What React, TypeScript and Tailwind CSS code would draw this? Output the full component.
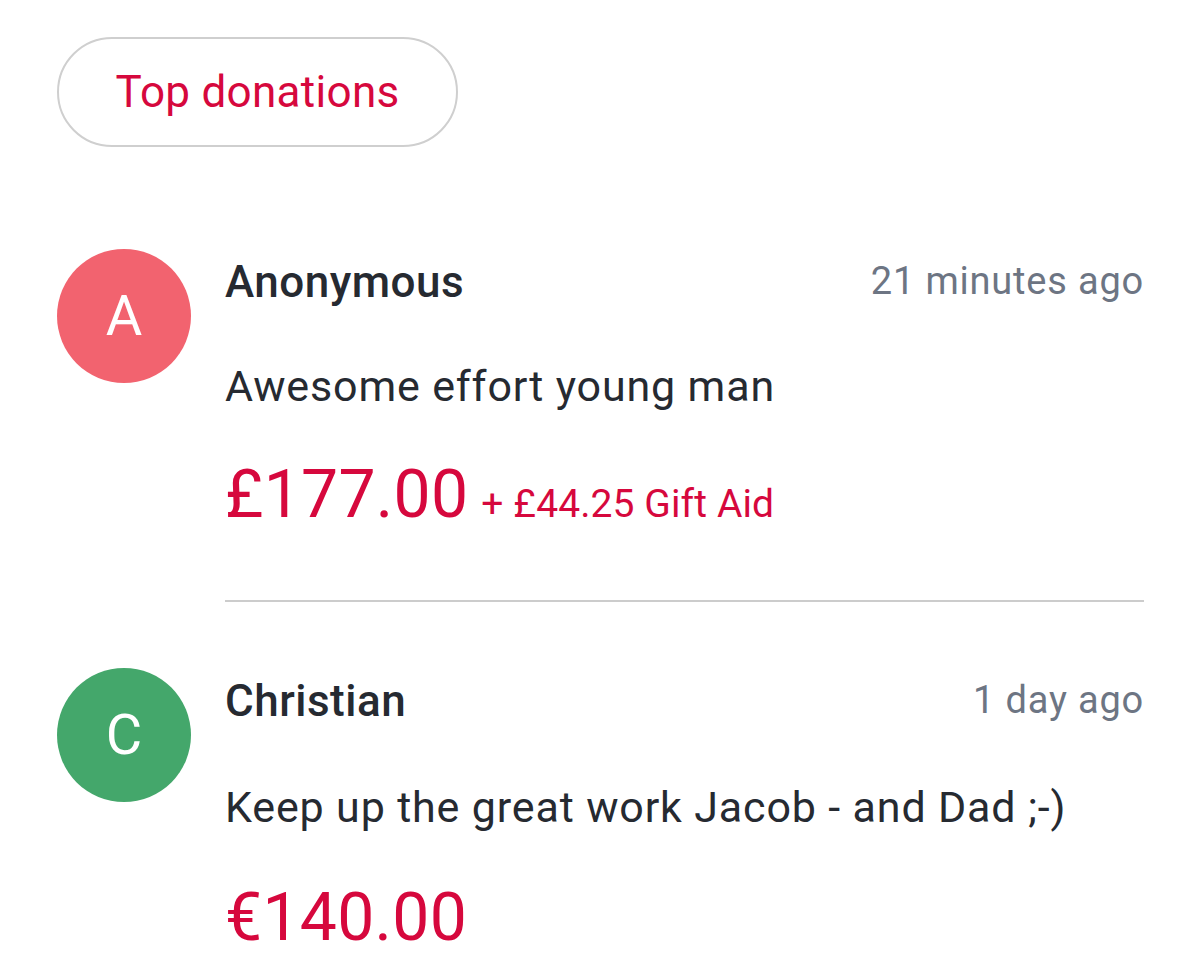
import React from "react";

type Item = {
  initial: string;
  color: string;
  name: string;
  time: string;
  message: string;
  amount: string;
  giftAid?: string;
};

const items: Item[] = [
  {
    initial: "A",
    color: "bg-[#f2636f]",
    name: "Anonymous",
    time: "21 minutes ago",
    message: "Awesome effort young man",
    amount: "£177.00",
    giftAid: "+ £44.25 Gift Aid",
  },
  {
    initial: "C",
    color: "bg-[#44a76b]",
    name: "Christian",
    time: "1 day ago",
    message: "Keep up the great work Jacob - and Dad ;-)",
    amount: "€140.00",
  },
];

function Donation({ item, extra = 0 }: { item: Item; extra?: number }) {
  return (
    <div className="flex">
      <div
        className={`w-[134px] h-[134px] shrink-0 rounded-full ${item.color} flex items-center justify-center text-white text-[56px] leading-none`}
      >
        {item.initial}
      </div>
      <div className="ml-[34px] flex-1 pt-[11px]">
        <div className="flex justify-between items-baseline">
          <div className="text-[44px] leading-[44px] font-medium tracking-[0.5px] text-[#262a31]">{item.name}</div>
          <div className="text-[38px] leading-[44px] tracking-[0.8px] text-[#6d7583] relative top-[-3px]">{item.time}</div>
        </div>
        <div className="mt-[59px] text-[43px] leading-[43px] tracking-[0.85px] text-[#262a31]" style={extra ? { marginTop: 59 + extra } : undefined}>
          {item.message}
        </div>
        <div className="mt-[54px] flex items-baseline" style={extra ? { marginTop: 54 + extra } : undefined}>
          <span className="text-[66px] leading-[66px] tracking-[0.3px] text-[#d6083d]">{item.amount}</span>
          {item.giftAid && (
            <span className="ml-[13px] text-[39px] leading-[39px] tracking-[0.1px] text-[#d6083d]">{item.giftAid}</span>
          )}
        </div>
      </div>
    </div>
  );
}

export default function App() {
  return (
    <div
      className="w-[1200px] h-[978px] bg-white overflow-hidden pl-[57px] pr-[56px] pt-[37px]"
      style={{ fontFamily: "Roboto, 'Noto Sans', sans-serif" }}
    >
      <div className="w-[401px] h-[110px] rounded-full border-2 border-[#cfcfcf] flex items-center justify-center text-[44px] tracking-[0.3px] text-[#d6083d]">
        Top donations
      </div>
      <div className="mt-[102px]">
        <Donation item={items[0]} />
      </div>
      <div className="ml-[168px] mt-[72px] h-[2px] bg-[#cccccc]" />
      <div className="mt-[66px]">
        <Donation item={items[1]} extra={2} />
      </div>
    </div>
  );
}
